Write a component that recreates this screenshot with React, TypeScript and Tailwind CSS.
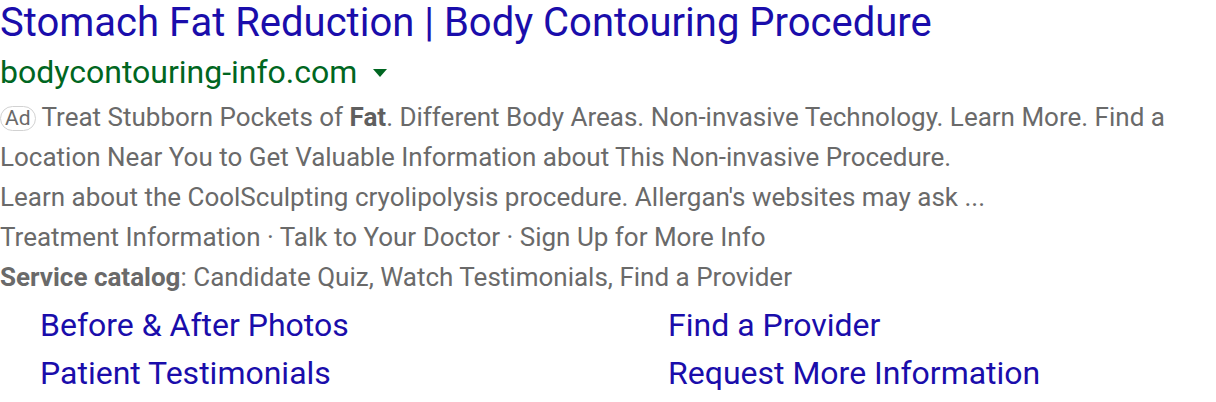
import React from "react";

const sitelinks = [
  ["Before & After Photos", "Find a Provider"],
  ["Patient Testimonials", "Request More Information"],
];

export default function App() {
  return (
    <div className="w-[1216px] h-[402px] bg-white overflow-hidden font-['Roboto',sans-serif]">
      <div className="text-[40px] leading-[46px] text-[#1a0dab] whitespace-nowrap">
        Stomach Fat Reduction | Body Contouring Procedure
      </div>
      <div className="flex items-center h-[51px] text-[32px] text-[#006621]">
        <span>bodycontouring-info.com</span>
        <svg className="ml-[16px] mt-[2px]" width="14" height="8" viewBox="0 0 14 8">
          <path d="M0 0h14L7 8z" fill="#006621" />
        </svg>
      </div>
      <div className="w-[1190px] text-[26px] leading-[40px] text-[#6a6a6a]">
        <div>
          <span className="inline-flex items-center justify-center h-[25px] px-[4px] mr-[6px] rounded-full border border-[#d2d2d2] text-[21px] leading-none align-[1px]">
            Ad
          </span>
          Treat Stubborn Pockets of <b className="font-bold text-[#5f5f5f]">Fat</b>. Different Body Areas. Non-invasive
          Technology. Learn More. Find a Location Near You to Get Valuable Information about This Non-invasive
          Procedure.
        </div>
        <div>Learn about the CoolSculpting cryolipolysis procedure. Allergan's websites may ask ...</div>
        <div>Treatment Information · Talk to Your Doctor · Sign Up for More Info</div>
        <div>
          <b className="font-bold">Service catalog</b>: Candidate Quiz, Watch Testimonials, Find a Provider
        </div>
      </div>
      <div className="mt-[4px] pl-[40px]">
        {sitelinks.map((row, i) => (
          <div key={i} className="grid grid-cols-[628px_1fr] text-[32px] leading-[48px] text-[#1a0dab]">
            <span>{row[0]}</span>
            <span>{row[1]}</span>
          </div>
        ))}
      </div>
    </div>
  );
}
